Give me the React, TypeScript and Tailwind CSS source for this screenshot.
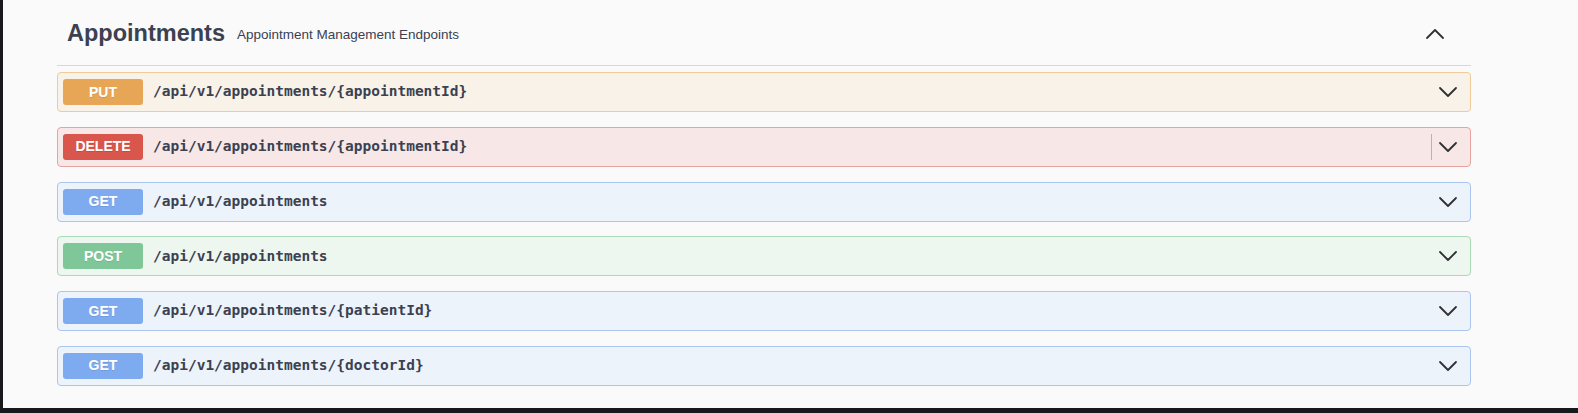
import React from 'react';

type Op = {
    method: string;
    path: string;
    badge: string;
    row: string;
    divider?: boolean;
};

const ops: Op[] = [
    { method: 'PUT', path: '/api/v1/appointments/{appointmentId}', badge: 'bg-[#e7a655]', row: 'bg-[#f9f2e8] border-[#eecb98]' },
    { method: 'DELETE', path: '/api/v1/appointments/{appointmentId}', badge: 'bg-[#d8564c]', row: 'bg-[#f7e7e7] border-[#e8a3a1]', divider: true },
    { method: 'GET', path: '/api/v1/appointments', badge: 'bg-[#7eaaf0]', row: 'bg-[#edf3fb] border-[#aac5ee]' },
    { method: 'POST', path: '/api/v1/appointments', badge: 'bg-[#7fc798]', row: 'bg-[#eef6f0] border-[#a9d9b6]' },
    { method: 'GET', path: '/api/v1/appointments/{patientId}', badge: 'bg-[#7eaaf0]', row: 'bg-[#edf3fb] border-[#aac5ee]' },
    { method: 'GET', path: '/api/v1/appointments/{doctorId}', badge: 'bg-[#7eaaf0]', row: 'bg-[#edf3fb] border-[#aac5ee]' },
];

function Chevron({ up = false }: { up?: boolean }) {
    return (
        <svg width="20" height="20" viewBox="0 0 20 20" className="text-[#2f3033]">
            <polyline
                points={up ? '2,14 10,6 18,14' : '2,6 10,14 18,6'}
                fill="none"
                stroke="currentColor"
                strokeWidth="1.8"
                strokeLinecap="round"
                strokeLinejoin="round"
            />
        </svg>
    );
}

function OpRow({ op }: { op: Op }) {
    return (
        <div className={`flex h-[40px] items-center rounded-[4px] border px-[5px] ${op.row}`}>
            <div
                className={`flex h-[26px] w-[80px] shrink-0 items-center justify-center rounded-[3px] text-[14px] font-bold text-white [text-shadow:0_1px_0_rgba(0,0,0,0.1)] ${op.badge}`}
                style={{ fontFamily: '"Liberation Sans", Arial, sans-serif' }}
            >
                {op.method}
            </div>
            <div
                className="ml-[10px] flex-1 text-[14.5px] font-bold text-[#3b4151]"
                style={{ fontFamily: '"DejaVu Sans Mono", "Liberation Mono", monospace' }}
            >
                {op.path}
            </div>
            {op.divider && <div className="mr-[6px] h-[26px] w-[1.5px] bg-[#b4b4b4]" />}
            <div className="mr-[7px] flex items-center">
                <Chevron />
            </div>
        </div>
    );
}

export default function App() {
    return (
        <div className="flex h-[413px] w-full bg-[#17191c] pb-[5px] pl-[3px]" style={{ fontFamily: '"Liberation Sans", Arial, sans-serif' }}>
            <div className="flex-1 bg-[#fafafa] pl-[54px]">
                <div className="w-[1414px]">
                    {/* Tag header */}
                    <div className="flex h-[66px] items-center border-b border-[#d6d7d9] pl-[10px] pr-[26px] pt-[3px]">
                        <div className="flex flex-1 items-center">
                            <span className="text-[23.5px] font-bold text-[#3b4151]">Appointments</span>
                            <span className="ml-[12px] pt-[2px] text-[13.5px] text-[#3b4151]">Appointment Management Endpoints</span>
                        </div>
                        <Chevron up />
                    </div>

                    {/* Operations */}
                    <div className="mt-[6px] flex flex-col gap-[14.8px]">
                        {ops.map((op, i) => (
                            <OpRow key={i} op={op} />
                        ))}
                    </div>
                </div>
            </div>
        </div>
    );
}
